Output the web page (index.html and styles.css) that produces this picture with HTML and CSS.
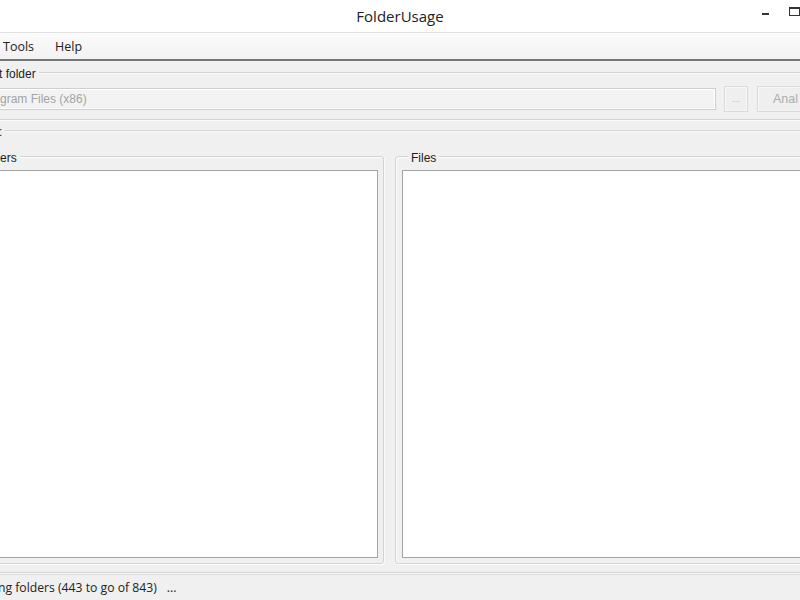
FILE: index.html
```html
<!DOCTYPE html>
<html lang="en">
<head>
  <meta charset="UTF-8">
  <title>FolderUsage</title>
  <link rel="stylesheet" href="styles.css">
</head>
<body>
  <!-- Window title bar -->
  <div class="titlebar">
    <div></div>
    <div class="title">FolderUsage</div>
    <div class="controls">
      <span class="btn-min"></span>
      <span class="btn-max"></span>
    </div>
  </div>

  <!-- Menu -->
  <div class="menubar">
    <span>Tools</span>
    <span>Help</span>
  </div>

  <div class="main">
    <!-- Folder picker -->
    <div class="group source">
      <div class="group-title">t folder</div>
      <div class="picker">
        <div class="path">gram Files (x86)</div>
        <button class="browse" disabled>...</button>
        <button class="analyse" disabled>Anal</button>
      </div>
    </div>

    <!-- Results -->
    <div class="group results">
      <div class="group-title colon">:</div>
      <div class="panes">
        <div class="group pane folders">
          <div class="group-title">ers</div>
          <div class="list"></div>
        </div>
        <div class="group pane files">
          <div class="group-title">Files</div>
          <div class="list"></div>
        </div>
      </div>
    </div>
  </div>

  <!-- Status bar -->
  <div class="statusbar">
    <span class="status-text">ng folders (443 to go of 843)</span>
    <span>...</span>
  </div>
</body>
</html>
```

FILE: styles.css
```css
/* Reset */
* {
  box-sizing: border-box;
}

body {
  margin: 0;
  width: 800px;
  height: 600px;
  overflow: hidden;
  background: #f0f0f0;
  font-family: "Liberation Sans", Arial, sans-serif;
  color: #1e1e1e;
}

/* Title bar */
.titlebar {
  display: grid;
  grid-template-columns: 200px 1fr 200px;
  height: 33px;
  background: #fff;
  border-bottom: 1px solid #e2e2e2;
}

.title {
  align-self: center;
  text-align: center;
  font-family: "Open Sans", sans-serif;
  font-size: 15px;
  color: #222;
}

.controls {
  display: flex;
  align-items: flex-start;
  gap: 20px;
  padding-left: 162px;
}

.btn-min {
  width: 7px;
  height: 2px;
  margin-top: 13px;
  background: #333;
}

.btn-max {
  width: 11px;
  height: 9px;
  margin-top: 7px;
  border: 1px solid #333;
  border-top-width: 2px;
}

/* Menu bar */
.menubar {
  display: flex;
  align-items: center;
  gap: 21px;
  height: 28px;
  padding-left: 3px;
  background: linear-gradient(#fbfbfb, #f2f2f2);
  border-bottom: 2px solid #777;
  font-family: "Open Sans", sans-serif;
  font-size: 12.5px;
  color: #222;
}

/* Main area */
.main {
  width: 920px;
  margin-left: -20px;
  padding-top: 11px;
}

.group {
  border: 1px solid #d3d3d3;
  border-radius: 3px;
  box-shadow: inset 1px 1px 0 #fbfbfb, 1px 1px 0 #fbfbfb;
}

.group-title {
  width: max-content;
  margin: -6px 0 0 15px;
  padding: 0 3px;
  background: #f0f0f0;
  font-size: 12px;
  line-height: 15px;
}

/* Folder picker */
.source {
  padding-bottom: 7px;
}

.picker {
  display: flex;
  align-items: center;
  margin-top: 4px;
}

.path {
  width: 735px;
  height: 22px;
  padding-left: 18px;
  border: 1px solid #cfcfcf;
  background: #f3f3f3;
  box-shadow: inset 0 0 0 1px #fff;
  font-size: 12px;
  line-height: 20px;
  color: #a3a3a3;
}

.picker button {
  height: 26px;
  padding: 0;
  border: 1px solid #d9d9d9;
  background: #efefef;
  box-shadow: inset 0 0 0 1px #f7f7f7;
  color: #adadad;
  font-family: "Liberation Sans", Arial, sans-serif;
}

.browse {
  width: 24px;
  margin-left: 8px;
  font-size: 9px;
}

.analyse {
  width: 60px;
  margin-left: 9px;
  padding-left: 15px !important;
  text-align: left;
  font-size: 12.5px;
}

/* Results */
.results {
  margin-top: 10px;
  padding: 0 0 8px 9px;
}

.results .colon {
  margin-left: 6px;
}

.panes {
  display: grid;
  grid-template-columns: 394px 1fr;
  column-gap: 11px;
  margin-top: 16px;
}

.pane {
  padding-bottom: 5px;
}

.pane .group-title {
  margin-left: 6px;
}

.folders {
  padding-right: 5px;
}

.files {
  padding-left: 6px;
}

.list {
  height: 388px;
  margin-top: 4px;
  background: #fff;
  border: 1px solid #a3a3a3;
}

/* Status bar */
.statusbar {
  display: flex;
  align-items: center;
  gap: 10px;
  height: 27px;
  margin-top: 1px;
  border-top: 1px solid #dcdcdc;
  border-bottom: 1px solid #d6d6d6;
  font-family: "Open Sans", sans-serif;
  font-size: 12.2px;
  color: #222;
}

.status-text {
  margin-left: -2px;
}
```
